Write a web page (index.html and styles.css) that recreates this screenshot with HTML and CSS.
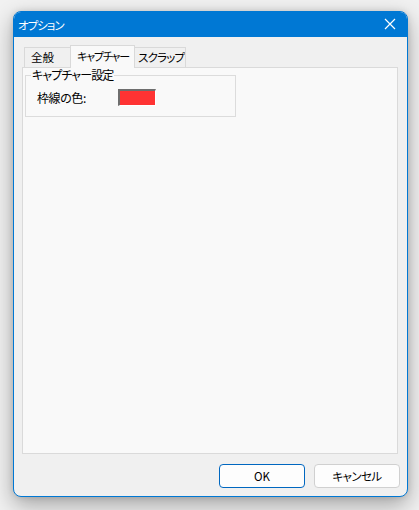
FILE: index.html
```html
<!DOCTYPE html>
<html lang="ja">
<head>
<meta charset="utf-8">
<link rel="stylesheet" href="styles.css">
</head>
<body>
<div class="window">
  <div class="titlebar">
    <span class="title">オプション</span>
    <svg class="close" width="12" height="12" viewBox="0 0 12 12"><path d="M1 1L11 11M11 1L1 11" stroke="#fff" stroke-width="1.2" fill="none"/></svg>
  </div>
  <div class="content">
    <div class="tabs">
      <div class="tab t1">全般</div>
      <div class="tab t2 active">キャプチャー</div>
      <div class="tab t3">スクラップ</div>
    </div>
    <div class="panel">
      <fieldset class="group">
        <legend>キャプチャー設定</legend>
        <div class="row">
          <span class="label">枠線の色:</span>
          <span class="swatch"></span>
        </div>
      </fieldset>
    </div>
    <div class="buttons">
      <button class="btn ok">OK</button>
      <button class="btn">キャンセル</button>
    </div>
  </div>
</div>
</body>
</html>
```
FILE: styles.css
```css
html, body { margin: 0; padding: 0; }
body {
  width: 419px; height: 510px;
  background: #f1f1f1;
  font-family: "Noto Sans CJK JP", "Noto Sans", sans-serif;
  font-feature-settings: "palt";
  font-size: 12px;
  color: #000;
  padding: 11px 0 0 13px;
  box-sizing: border-box;
}
.window {
  width: 395px; height: 486px;
  box-sizing: border-box;
  border: 1px solid #0078d4;
  border-radius: 8px;
  background: #f0f0f0;
  box-shadow: 0 8px 22px rgba(0,0,0,0.32), 0 0 6px rgba(0,0,0,0.12);
  display: flex; flex-direction: column;
  overflow: hidden;
}
.titlebar {
  height: 25px;
  background: #0078d4;
  display: flex; align-items: center; justify-content: space-between;
  padding: 0 11px 0 4px;
  color: #fff;
  flex: none;
}
.title { font-size: 11.5px; line-height: 14px; letter-spacing: -1px; }
.close { display: block; margin-top: -1px; }
.content {
  flex: 1;
  display: flex; flex-direction: column;
  padding: 8px 9px 8px 8px;
}
.tabs { display: flex; align-items: flex-end; height: 22px; padding-left: 2px; }
.tab {
  box-sizing: border-box;
  height: 20px;
  border: 1px solid #d9d9d9;
  border-bottom: none;
  background: #f0f0f0;
  line-height: 18px;
  padding-left: 5px;
  white-space: nowrap;
  overflow: hidden;
  font-size: 11.5px;
  letter-spacing: -0.8px;
}
.t1 { width: 47px; padding-left: 6px; letter-spacing: 0; }
.t2 { width: 65px; margin-left: -1px; }
.t3 { width: 52px; margin-left: -1px; padding-left: 3px; }
.tab.active {
  height: 23px;
  background: #f9f9f9;
  position: relative; z-index: 1;
  margin-bottom: -1px;
  line-height: 20px;
  padding-left: 6px;
  font-size: 11px;
  letter-spacing: -1.2px;
}
.panel {
  flex: 1;
  background: #f9f9f9;
  border: 1px solid #dadada;
  padding: 0 2px;
}
.group {
  margin: 0;
  width: 211px;
  box-sizing: border-box;
  border: 1px solid #dcdcdc;
  padding: 7px 11px 11px 11px;
}
.group legend {
  line-height: 14px;
  padding: 0 1px;
  margin-left: -6px;
  letter-spacing: -0.9px;
}
.row { display: flex; align-items: center; height: 16px; }
.label { width: 81px; letter-spacing: -0.4px; }
.swatch {
  box-sizing: border-box;
  width: 38px; height: 17px;
  background: #ff3333;
  border-top: 2px solid #6e6e6e;
  border-left: 2px solid #6e6e6e;
  border-right: 1px solid #fff;
  border-bottom: 1px solid #fff;
}
.buttons {
  display: flex; justify-content: flex-end; gap: 9px;
  margin-top: 10px;
  margin-right: -2px;
}
.btn {
  width: 86px; height: 24px;
  box-sizing: border-box;
  border: 1px solid #d0d0d0;
  border-radius: 4px;
  background: #fdfdfd;
  font-family: "Noto Sans CJK JP", "Noto Sans", sans-serif;
  font-feature-settings: "palt";
  font-size: 11.5px;
  letter-spacing: -0.6px;
  color: #000;
  padding: 0;
}
.btn.ok { border-color: #0067c0; letter-spacing: 0; }
```
